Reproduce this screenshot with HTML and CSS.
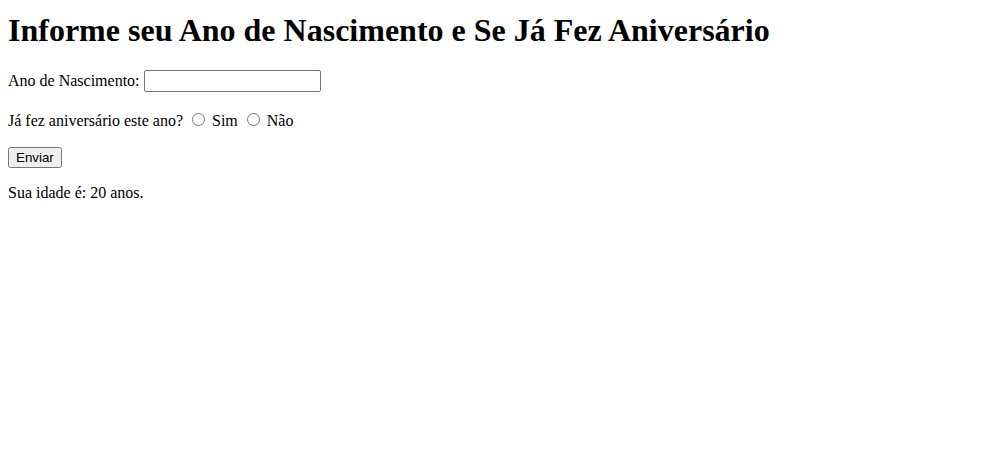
FILE: index.html
```html
<!DOCTYPE html>
<html lang="pt-BR">
<head>
<meta charset="utf-8">
<title>Idade</title>
<link rel="stylesheet" href="styles.css">
</head>
<body class="page">
<h1 class="title">Informe seu Ano de Nascimento e Se Já Fez Aniversário</h1>
<form class="form">
<p class="row"><label for="ano">Ano de Nascimento:</label> <input class="field" type="text" id="ano" name="ano"></p>
<p class="row row-radio">Já fez aniversário este ano? <input class="radio" type="radio" name="aniv" id="sim" value="sim"> <label for="sim">Sim</label> <input class="radio" type="radio" name="aniv" id="nao" value="nao"> <label for="nao">Não</label></p>
<input class="btn" type="submit" value="Enviar">
</form>
<p class="result">Sua idade é: 20 anos.</p>
</body>
</html>
```
FILE: styles.css
```css
.page {
  margin: 8px;
  font-family: "Liberation Serif", "Times New Roman", serif;
  font-size: 16px;
  color: #000;
  background: #fff;
}
.title {
  font-size: 2em;
  font-weight: bold;
  margin: 4px 0 21px;
}
.row {
  margin: 1em 0;
}
.row-radio {
  margin: 18px 0 17px;
}
.field {
  font-family: "Liberation Sans", Arial, sans-serif;
  font-size: 13.333px;
  box-sizing: border-box;
  width: 177px;
  height: 22px;
  border: 1px solid #767676;
  border-radius: 2px;
  padding: 1px 2px;
}
.radio {
  margin: 3px 3px 0 5px;
}
.btn {
  font-family: "Liberation Sans", Arial, sans-serif;
  font-size: 13.333px;
}
.result {
  margin: 1em 0;
}
```
